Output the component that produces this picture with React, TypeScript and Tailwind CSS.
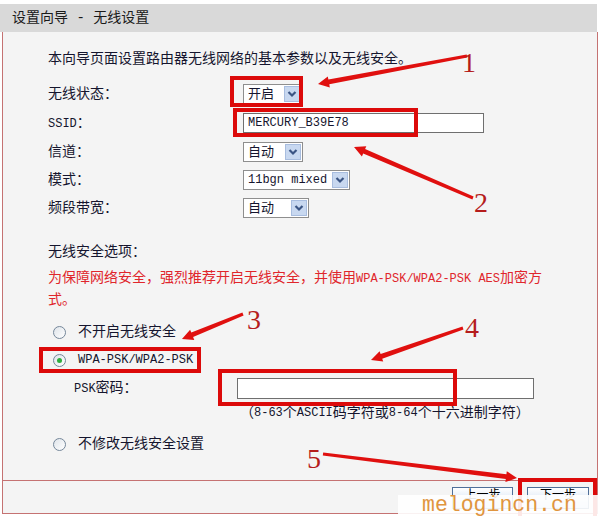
import React from "react";

const FONT = "font-['Liberation_Mono','Noto_Sans_CJK_SC',monospace]";

function Chevron() {
  return (
    <svg width="10" height="8" viewBox="0 0 10 8">
      <polyline points="1.5,2 5,5.5 8.5,2" fill="none" stroke="#3b5584" strokeWidth="2.2" />
    </svg>
  );
}

function Select({ value, width, latin }: { value: string; width: string; latin?: boolean }) {
  return (
    <div className={`h-[20px] ${width} border border-[#8e8e8e] bg-white flex items-center`}>
      <span className={`flex-1 pl-[4px] leading-none whitespace-nowrap ${latin ? "text-[12px]" : "text-[13px]"}`}>
        {value}
      </span>
      <span className="w-[16px] h-[16px] mr-[1px] bg-[#c8d8f0] border border-[#a8bddf] flex items-center justify-center">
        <Chevron />
      </span>
    </div>
  );
}

function Radio({ checked }: { checked?: boolean }) {
  return (
    <span className="w-[13px] h-[13px] rounded-full border-[1.5px] border-[#75879a] bg-gradient-to-br from-[#dfe4ea] to-white flex items-center justify-center shrink-0">
      {checked && <span className="w-[5px] h-[5px] rounded-full bg-[#2fae3e]" />}
    </span>
  );
}

function Row({ label, children, className }: { label: React.ReactNode; children?: React.ReactNode; className: string }) {
  return (
    <div className={`h-[28px] flex items-center ${className}`}>
      <div className="w-[195px] whitespace-nowrap">{label}</div>
      {children}
    </div>
  );
}

function arrowPts(x1: number, y1: number, x2: number, y2: number) {
  const dx = x2 - x1;
  const dy = y2 - y1;
  const L = Math.hypot(dx, dy);
  const ux = dx / L;
  const uy = dy / L;
  const px = -uy;
  const py = ux;
  const bx = x2 - ux * 11;
  const by = y2 - uy * 11;
  const p = (x: number, y: number) => `${x.toFixed(1)},${y.toFixed(1)}`;
  return [
    p(x1 + px * 1.6, y1 + py * 1.6),
    p(bx + px * 2.4, by + py * 2.4),
    p(bx + px * 5.5, by + py * 5.5),
    p(x2, y2),
    p(bx - px * 5.5, by - py * 5.5),
    p(bx - px * 2.4, by - py * 2.4),
    p(x1 - px * 1.6, y1 - py * 1.6),
  ].join(" ");
}

const arrows = [
  [467, 56, 318, 84],
  [473, 198, 354, 147],
  [243, 314, 182, 339],
  [463, 328, 371, 360],
  [323, 454, 517, 478],
];

const numbers = [
  { n: "1", x: 462, y: 72 },
  { n: "2", x: 474, y: 212 },
  { n: "3", x: 247, y: 329 },
  { n: "4", x: 465, y: 337 },
  { n: "5", x: 307, y: 468 },
];

export default function App() {
  return (
    <div className={`relative w-[600px] h-[516px] bg-white overflow-hidden text-[14px] text-[#15152e] ${FONT}`}>
      <div className="h-[4px]" />
      <div className="h-[28px] w-[597px] bg-[#d9d9d9] flex items-center pl-[12px] text-[#1a1a1a]">
        设置向导 - 无线设置
      </div>

      <div className="ml-[2px] w-[596px] h-[482px] border-x border-b border-[#c57272] bg-[#f4f4f4] flex flex-col">
        <div className="flex-1 pl-[45px] flex flex-col">
          <div className="h-[28px] mt-[13px] flex items-center">本向导页面设置路由器无线网络的基本参数以及无线安全。</div>

          <Row label="无线状态：" className="mt-[7px]">
            <Select value="开启" width="w-[59px]" />
          </Row>
          <Row label={<><span className="text-[12px]">SSID</span>：</>} className="mt-[1px]">
            <div className="h-[20px] w-[241px] border border-[#6f6f6f] bg-white flex items-center pl-[4px] text-[12px] leading-none">
              MERCURY_B39E78
            </div>
          </Row>
          <Row label="信道：" className="mt-[1px]">
            <Select value="自动" width="w-[60px]" />
          </Row>
          <Row label="模式：" className="">
            <Select value="11bgn mixed" width="w-[107px]" latin />
          </Row>
          <Row label="频段带宽：" className="">
            <Select value="自动" width="w-[66px]" />
          </Row>

          <div className="h-[28px] mt-[16px] flex items-center">无线安全选项：</div>
          <div className="mt-[2px] leading-[21px] text-[#e0262c] whitespace-nowrap">
            为保障网络安全，强烈推荐开启无线安全，并使用<span className="text-[12px]">WPA-PSK/WPA2-PSK AES</span>加密方
            <br />
            式。
          </div>

          <div className="h-[27px] mt-[8px] flex items-center pl-[5px] gap-[12px]">
            <Radio />
            <span>不开启无线安全</span>
          </div>
          <div className="h-[28px] flex items-center pl-[5px] gap-[12px]">
            <Radio checked />
            <span className="text-[12px]">WPA-PSK/WPA2-PSK</span>
          </div>
          <div className="h-[28px] flex items-center pl-[26px]">
            <div className="w-[163px] whitespace-nowrap">
              <span className="text-[12px]">PSK</span>密码：
            </div>
            <div className="h-[21px] w-[297px] border border-[#6f6f6f] bg-white" />
          </div>
          <div className="h-[22px] flex items-center pl-[192px] whitespace-nowrap">
            （<span className="text-[12px]">8-63</span>个<span className="text-[12px]">ASCII</span>码字符或<span className="text-[12px]">8-64</span>个十六进制字符）
          </div>
          <div className="h-[28px] mt-[6px] flex items-center pl-[5px] gap-[12px]">
            <Radio />
            <span>不修改无线安全设置</span>
          </div>
        </div>

        <div className="h-[33px] border-t border-[#c57272] flex items-start pt-[6px] pl-[449px] gap-[14px]">
          <button className="w-[61px] h-[22px] border border-[#4f6f99] bg-gradient-to-b from-white to-[#c9daf0] text-[12px] leading-[14px] text-black flex items-start justify-center pt-[1px]">
            上一步
          </button>
          <button className="w-[62px] h-[22px] border border-[#4f6f99] bg-gradient-to-b from-white to-[#c9daf0] text-[12px] leading-[14px] text-black flex items-start justify-center pt-[1px]">
            下一步
          </button>
        </div>
      </div>

      {/* annotations */}
      <svg className="absolute inset-0 pointer-events-none" width="600" height="516" viewBox="0 0 600 516">
        <g fill="none" stroke="#dc0a0a" strokeWidth="4">
          <rect x="232" y="78" width="69" height="27" />
          <rect x="235" y="110" width="181" height="25" />
          <rect x="41" y="349" width="158" height="22" />
          <rect x="220" y="371" width="235" height="33" />
          <rect x="520" y="480" width="75" height="40" />
        </g>
        {arrows.map(([x1, y1, x2, y2], i) => (
          <polygon key={i} points={arrowPts(x1, y1, x2, y2)} fill="#e0100f" />
        ))}
        {numbers.map((d) => (
          <text key={d.n} x={d.x} y={d.y} fill="#b51c1c" fontSize="28" fontFamily="'Liberation Serif', serif">
            {d.n}
          </text>
        ))}
      </svg>

      <div className="absolute left-[398px] top-[495px] w-[202px] h-[21px] bg-white/90 pl-[24px] text-[21.5px] leading-[21px] text-[#e0953f] font-['Liberation_Mono',monospace]">
        melogincn.cn
      </div>
    </div>
  );
}
